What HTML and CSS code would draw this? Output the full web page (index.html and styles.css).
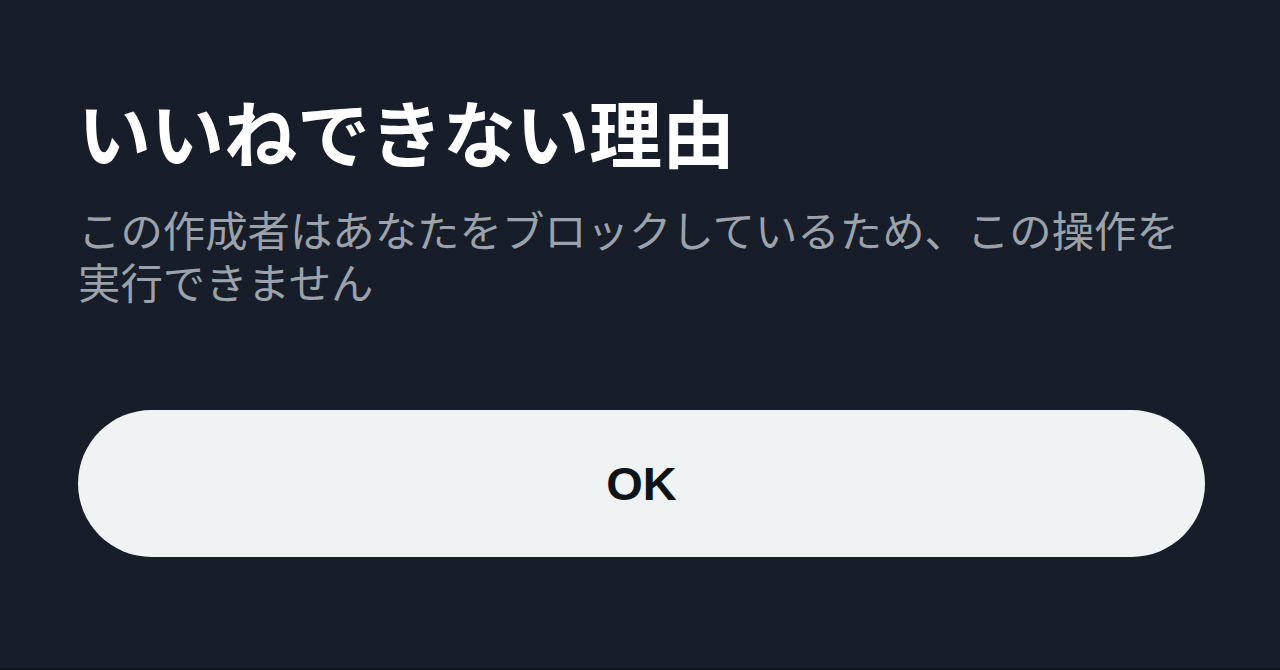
FILE: index.html
```html
<!DOCTYPE html>
<html lang="ja">
<head>
<meta charset="utf-8">
<link rel="stylesheet" href="styles.css">
</head>
<body>
<div class="dialog">
  <h1 class="title">いいねできない理由</h1>
  <p class="message">この作成者はあなたをブロックしているため、この操作を実行できません</p>
  <button class="ok-button">OK</button>
</div>
</body>
</html>
```
FILE: styles.css
```css
html, body {
  margin: 0;
  padding: 0;
  background: #171e2a;
  height: 100%;
}
body {
  width: 1280px;
  height: 670px;
  overflow: hidden;
  border-bottom: 2px solid #10151e;
  box-sizing: border-box;
}
.dialog {
  padding: 85px 76px 0 78px;
  display: flex;
  flex-direction: column;
}
.title {
  margin: 0;
  font-family: "Noto Sans CJK JP", sans-serif;
  font-weight: 700;
  font-size: 73px;
  line-height: 90px;
  color: #ffffff;
}
.message {
  margin: 28px 0 0 0;
  font-family: "Noto Sans CJK JP", sans-serif;
  font-weight: 400;
  font-size: 42.4px;
  line-height: 52px;
  color: #9ca2ab;
  width: 1120px;
}
.ok-button {
  margin-top: 103px;
  width: 1127px;
  height: 147px;
  border: none;
  border-radius: 74px;
  background: #eff3f4;
  color: #0f1419;
  font-family: "Liberation Sans", Arial, sans-serif;
  font-weight: 700;
  font-size: 47px;
  padding: 0;
}
```
